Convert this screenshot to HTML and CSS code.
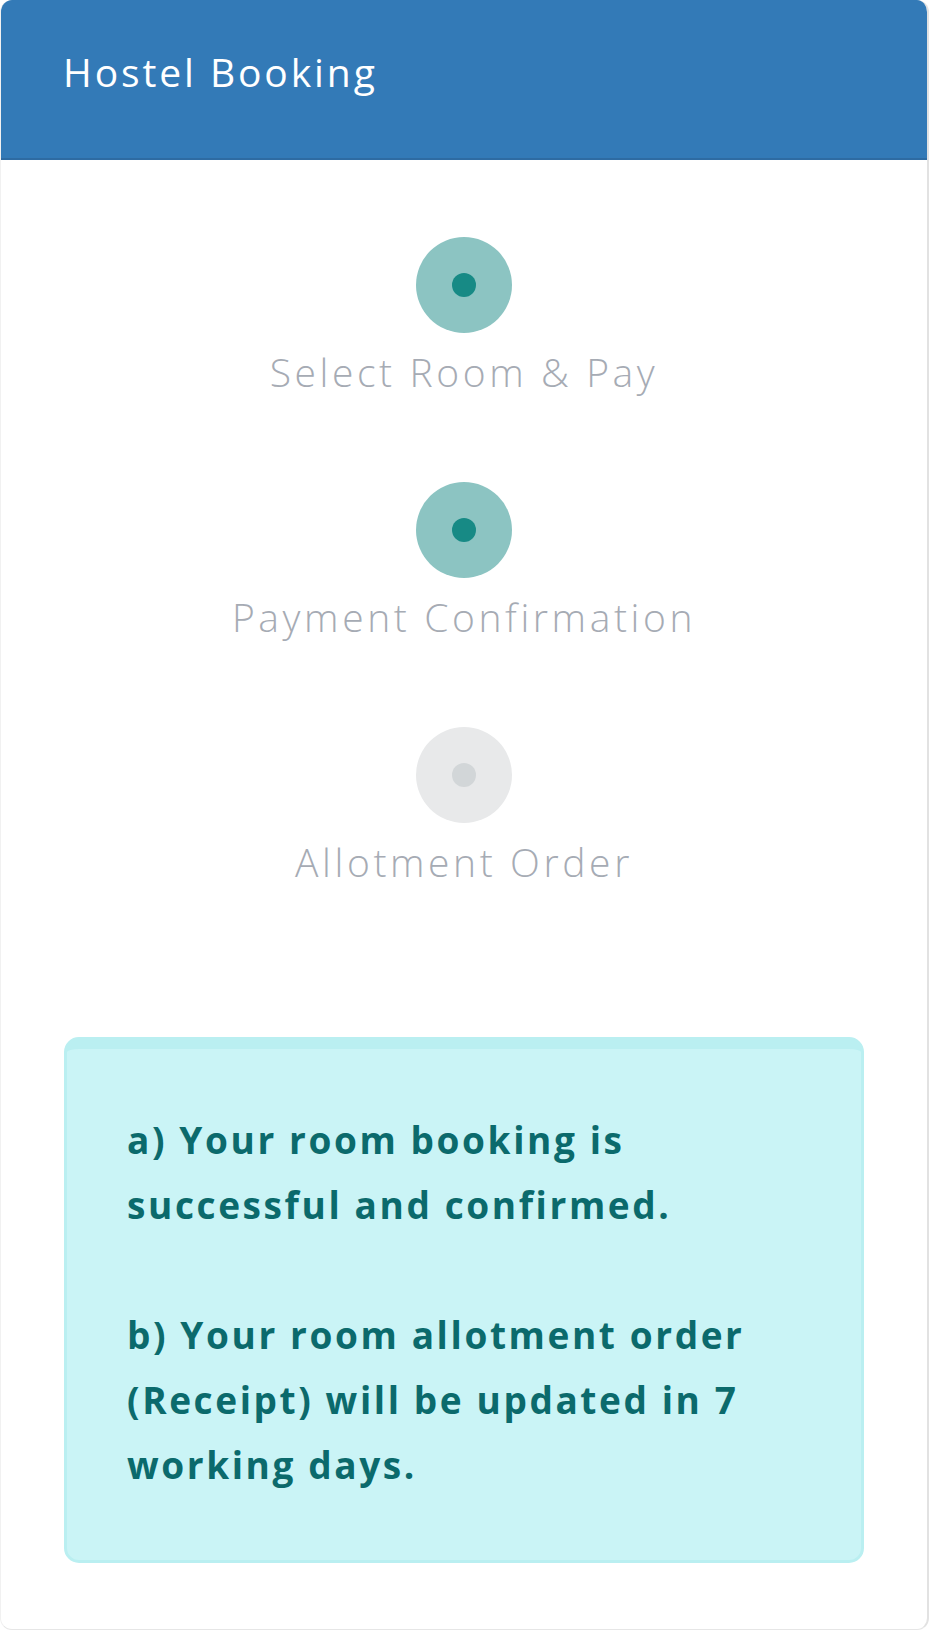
FILE: index.html
```html
<!DOCTYPE html>
<html lang="en">
<head>
<meta charset="utf-8">
<title>Hostel Booking</title>
<link rel="stylesheet" href="styles.css">
</head>
<body>
<div class="card">
  <div class="card-header">
    <h1 class="card-title">Hostel Booking</h1>
  </div>
  <div class="card-body">
    <ol class="steps">
      <li class="step step-done">
        <span class="step-dot"><span class="step-core"></span></span>
        <span class="step-label">Select Room &amp; Pay</span>
      </li>
      <li class="step step-done">
        <span class="step-dot"><span class="step-core"></span></span>
        <span class="step-label">Payment Confirmation</span>
      </li>
      <li class="step step-todo">
        <span class="step-dot"><span class="step-core"></span></span>
        <span class="step-label">Allotment Order</span>
      </li>
    </ol>
    <div class="alert">
      <p class="alert-text">a) Your room booking is<br>successful and confirmed.</p>
      <p class="alert-text">b) Your room allotment order<br>(Receipt) will be updated in 7<br>working days.</p>
    </div>
  </div>
</div>
</body>
</html>
```
FILE: styles.css
```css
html, body {
  margin: 0;
  padding: 0;
  background: #ffffff;
}

body {
  font-family: "Open Sans", "Lato", sans-serif;
}

.card {
  width: 929px;
  box-sizing: border-box;
  border-right: 2px solid #e2e2e2;
  border-left: 1px solid #f1f1f1;
  border-bottom: 1px solid #e6e6e6;
  border-radius: 12px;
  overflow: hidden;
  background: #ffffff;
}

.card-header {
  background: #337ab7;
  border-bottom: 2px solid #2e6ba2;
  padding: 49px 62px 63px;
}

.card-title {
  margin: 0;
  color: #ffffff;
  font-size: 39px;
  font-weight: 400;
  line-height: 46px;
  letter-spacing: 2.9px;
}

.card-body {
  padding: 77px 63px 66px;
}

.steps {
  list-style: none;
  margin: 0 0 152px;
  padding: 0;
  display: flex;
  flex-direction: column;
  gap: 87px;
}

.step {
  display: flex;
  flex-direction: column;
  align-items: center;
  gap: 16px;
}

.step-dot {
  width: 96px;
  height: 96px;
  border-radius: 50%;
  display: flex;
  align-items: center;
  justify-content: center;
}

.step-core {
  width: 24px;
  height: 24px;
  border-radius: 50%;
}

.step-done .step-dot { background: #8cc4c2; }
.step-done .step-core { background: #178a85; }
.step-todo .step-dot { background: #e8e9ea; }
.step-todo .step-core { background: #d2d6d8; }

.step-label {
  color: #a6abb4;
  font-size: 39px;
  font-weight: 300;
  line-height: 46px;
  letter-spacing: 3.6px;
}

.alert {
  background: #caf4f6;
  border: 3px solid #baeff1;
  border-top-width: 12px;
  border-radius: 15px;
  padding: 58px 60px 63px;
}

.alert-text {
  margin: 0;
  color: #0b6a6c;
  font-size: 37px;
  font-weight: 700;
  line-height: 65px;
  letter-spacing: 2.6px;
}

.alert-text + .alert-text {
  margin-top: 65px;
}
```
